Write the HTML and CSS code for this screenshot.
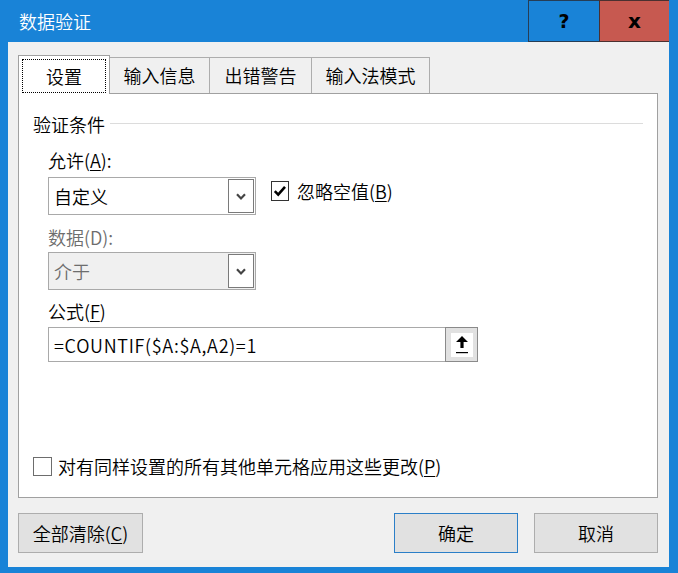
FILE: index.html
```html
<!DOCTYPE html>
<html lang="zh-CN">
<head>
<meta charset="utf-8">
<title>数据验证</title>
<link rel="stylesheet" href="styles.css">
</head>
<body>
<div class="window">
  <header class="titlebar">
    <div class="title">数据验证</div>
    <div class="caption-btns">
      <div class="cap help">?</div>
      <div class="cap close">x</div>
    </div>
  </header>
  <div class="client">
    <div class="tabs">
      <div class="tab active"><span class="focus">设置</span></div>
      <div class="tab t-input">输入信息</div>
      <div class="tab t-error">出错警告</div>
      <div class="tab t-ime">输入法模式</div>
    </div>
    <div class="panel">
      <div class="group-head"><span class="group-title">验证条件</span><span class="rule"></span></div>
      <div class="group-body">
        <div class="label l-allow">允许(<u>A</u>):</div>
        <div class="row">
          <div class="combo">
            <span class="value">自定义</span>
            <span class="drop"><svg width="10" height="7" viewBox="0 0 10 7"><path d="M1 1.2 L5 5.4 L9 1.2" fill="none" stroke="#444" stroke-width="2.2"/></svg></span>
          </div>
          <div class="check">
            <span class="box"><svg width="16" height="16" viewBox="0 0 16 16"><path d="M2.8 8.2 L6.2 11.6 L13 3.8" fill="none" stroke="#000" stroke-width="2.6"/></svg></span>
            <span>忽略空值(<u>B</u>)</span>
          </div>
        </div>
        <div class="label disabled l-data">数据(D):</div>
        <div class="combo is-disabled">
          <span class="value">介于</span>
          <span class="drop"><svg width="10" height="7" viewBox="0 0 10 7"><path d="M1 1.2 L5 5.4 L9 1.2" fill="none" stroke="#444" stroke-width="2.2"/></svg></span>
        </div>
        <div class="label l-formula">公式(<u>F</u>)</div>
        <div class="formula">
          <span class="value formula-text">=COUNTIF($A:$A,A2)=1</span>
          <span class="collapse"><span class="collapse-inner"><svg width="22" height="24" viewBox="0 0 22 24"><path d="M11 3 L17 9 L12.6 9 L12.6 15 L9.4 15 L9.4 9 L5 9 Z" fill="#000"/><rect x="5" y="19" width="12" height="1.2" fill="#000"/></svg></span></span>
        </div>
      </div>
      <div class="apply-all">
        <span class="box empty"></span>
        <span>对有同样设置的所有其他单元格应用这些更改(<u>P</u>)</span>
      </div>
    </div>
    <div class="footer">
      <button class="btn clear">全部清除(<u>C</u>)</button>
      <div class="spacer"></div>
      <button class="btn default">确定</button>
      <button class="btn">取消</button>
    </div>
  </div>
</div>
</body>
</html>
```
FILE: styles.css
```css
* { box-sizing: border-box; }
html, body {
  margin: 0;
  padding: 0;
  width: 678px;
  height: 573px;
  overflow: hidden;
  font-family: "Noto Sans CJK SC", "Noto Sans", sans-serif;
  font-size: 18px;
  font-weight: 350;
  color: #000;
}
.window {
  width: 678px;
  height: 573px;
  background: #1983d7;
  padding: 0 9px 6px 8px;
  display: flex;
  flex-direction: column;
}
.titlebar {
  height: 42px;
  display: flex;
  align-items: stretch;
  justify-content: space-between;
  flex: none;
}
.title {
  color: #fff;
  line-height: 42px;
  padding-left: 11px;
}
.caption-btns {
  display: flex;
}
.cap {
  height: 42px;
  line-height: 40px;
  text-align: center;
  font-family: "DejaVu Sans", sans-serif;
  font-weight: bold;
  font-size: 19px;
  color: #000;
  border: 1px solid #263d55;
}
.help {
  width: 71px;
  background: #1983d7;
  border-right: none;
}
.close {
  width: 70px;
  background: #c75950;
  border-right: none;
  border-color: #4a3030;
  font-size: 20px;
}
.client {
  flex: 1;
  background: #f0f0f0;
  padding: 13px 11px 14px 10px;
  display: flex;
  flex-direction: column;
}
.tabs {
  height: 38px;
  display: flex;
  align-items: flex-end;
  flex: none;
}
.tab {
  height: 36px;
  line-height: 34px;
  text-align: center;
  background: #f0f0f0;
  border-top: 1px solid #adadad;
  border-right: 1px solid #adadad;
}
.tab.active {
  position: relative;
  z-index: 1;
  width: 92px;
  height: 39px;
  margin-bottom: -1px;
  background: #fff;
  border: 1px solid #a0a0a0;
  border-bottom: none;
  padding: 3px 3px 0 3px;
  line-height: normal;
}
.focus {
  display: block;
  height: 34px;
  line-height: 32px;
  border: 1px dotted #000;
}
.t-input { width: 100px; }
.t-error { width: 102px; }
.t-ime { width: 118px; }
.panel {
  height: 405px;
  flex: none;
  background: #fff;
  border: 1px solid #a0a0a0;
  padding: 18px 14px 19px 14px;
  display: flex;
  flex-direction: column;
}
.group-head {
  display: flex;
  align-items: center;
  height: 24px;
  line-height: 24px;
}
.rule {
  flex: 1;
  height: 1px;
  background: #dcdcdc;
  margin-left: 5px;
  margin-top: -1px;
}
.group-body {
  padding-left: 15px;
  display: flex;
  flex-direction: column;
}
.label {
  line-height: 24px;
  height: 24px;
}
.l-allow { margin-top: 12px; }
.l-data { margin-top: 10px; }
.l-formula { margin-top: 9px; }
.disabled { color: #6d6d6d; }
.row {
  display: flex;
  align-items: flex-start;
  margin-top: 5px;
}
.combo {
  width: 208px;
  height: 38px;
  border: 1px solid #a9a9a9;
  background: #fff;
  display: flex;
  align-items: center;
  justify-content: space-between;
  padding: 1px 1px 1px 5px;
  flex: none;
}
.combo.is-disabled {
  margin-top: 3px;
  background: #f0f0f0;
  color: #6d6d6d;
}
.value {
  line-height: 24px;
}
.formula-text {
  letter-spacing: 0.7px;
}
.drop {
  width: 26px;
  height: 34px;
  border: 1px solid #7a7a7a;
  background: #fff;
  display: flex;
  align-items: center;
  justify-content: center;
}
.check {
  display: flex;
  align-items: center;
  margin-left: 15px;
  margin-top: 2px;
  line-height: 24px;
  gap: 8px;
}
.box {
  width: 18px;
  height: 20px;
  border: 1px solid #333;
  background: #fff;
  display: flex;
  align-items: center;
  justify-content: center;
  flex: none;
}
.box.empty {
  width: 19px;
  height: 19px;
  border-color: #6d6d6d;
}
.formula {
  margin-top: 4px;
  width: 430px;
  height: 35px;
  border: 1px solid #a9a9a9;
  display: flex;
  align-items: center;
  justify-content: space-between;
  padding: 0 0 0 5px;
}
.collapse {
  width: 33px;
  height: 35px;
  margin-right: -1px;
  border: 1px solid #8a8a8a;
  background: #e1e1e1;
  padding: 4px;
  display: flex;
  align-items: center;
  justify-content: center;
}
.collapse-inner {
  display: block;
  width: 22px;
  height: 24px;
  background: #fff;
}
.collapse-inner svg { display: block; }
.apply-all {
  margin-top: auto;
  display: flex;
  align-items: center;
  gap: 6px;
  line-height: 24px;
}
.footer {
  margin-top: 15px;
  display: flex;
  height: 40px;
  gap: 16px;
}
.spacer { flex: 1; }
.btn {
  height: 40px;
  width: 124px;
  font: inherit;
  color: #000;
  background: #e1e1e1;
  border: 1px solid #adadad;
  padding: 0;
  line-height: 24px;
}
.btn.clear { width: 125px; }
.btn.default { border-color: #2b7fc8; }
u { text-decoration-thickness: 1px; text-underline-offset: 2px; }
```
